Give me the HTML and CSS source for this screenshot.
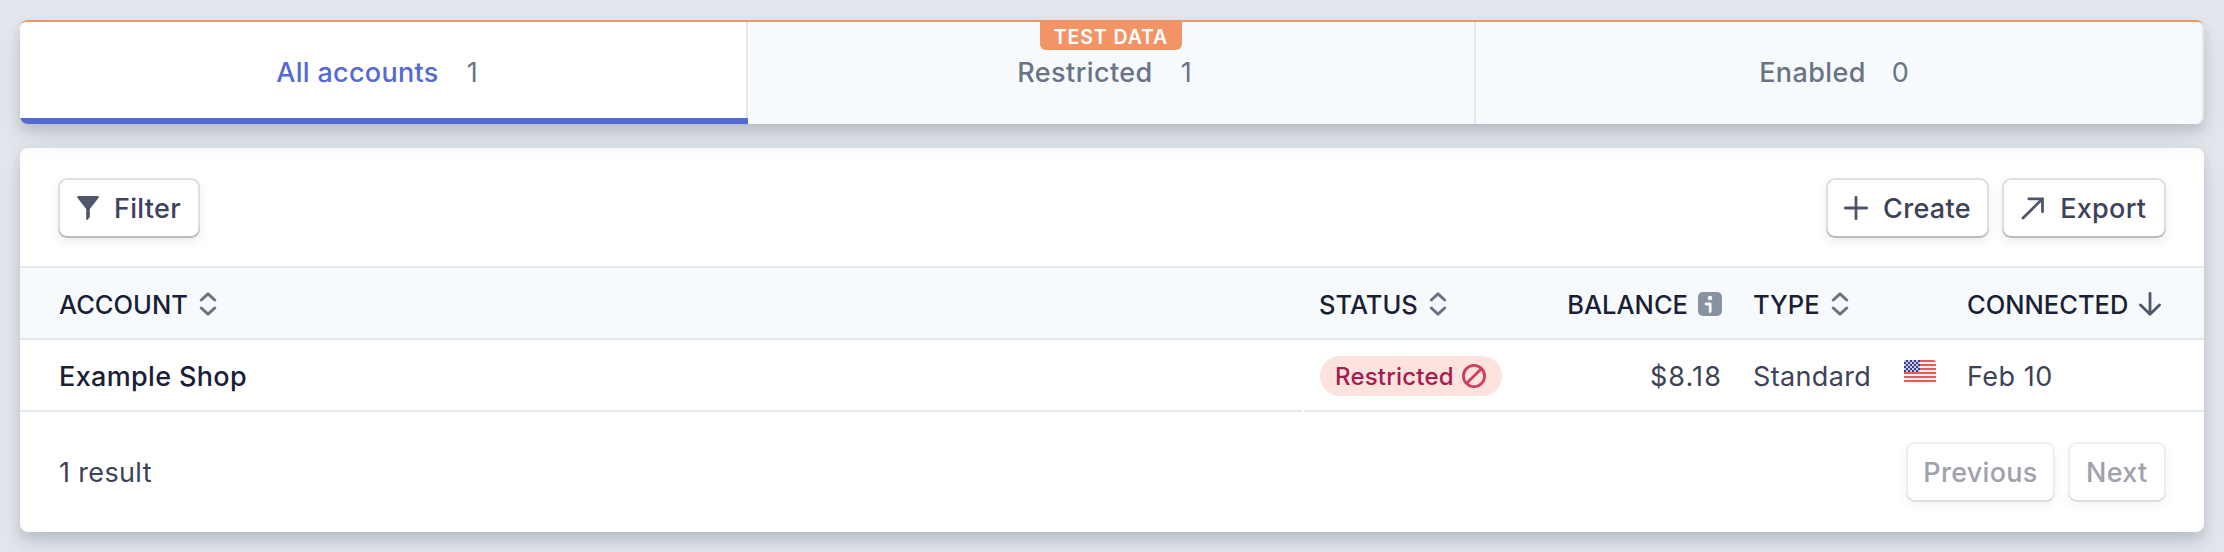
FILE: index.html
```html
<!DOCTYPE html>
<html lang="en">
<head>
<meta charset="utf-8">
<title>Connected accounts</title>
<link rel="stylesheet" href="styles.css">
</head>
<body>
<svg width="0" height="0" class="defs">
  <symbol id="sort" viewBox="0 0 18 24"><path d="M2.3 8 9 1.9 15.7 8M2.3 16 9 22.1 15.7 16" fill="none" stroke="currentColor" stroke-width="3" stroke-linecap="round" stroke-linejoin="round"/></symbol>
  <pattern id="stars" width="4" height="4" patternUnits="userSpaceOnUse"><path fill="#3c3f86" d="M0 0h4v4H0z"/><path fill="#c9cbe2" d="M0 0h2v2H0zM2 2h2v2H2z"/></pattern>
</svg>
<main class="page">
  <nav class="tabs">
    <a class="tab tab-active"><span class="tab-label">All accounts</span><span class="tab-count">1</span></a>
    <a class="tab tab-restricted"><span class="tab-label">Restricted</span><span class="tab-count">1</span></a>
    <a class="tab tab-enabled"><span class="tab-label">Enabled</span><span class="tab-count">0</span></a>
    <span class="badge">TEST DATA</span>
  </nav>
  <section class="card">
    <div class="toolbar">
      <button class="btn btn-filter"><svg width="22" height="24" viewBox="0 0 22 24"><path fill="currentColor" d="M1.2 0h19.6q1.6.3.8 1.8L12.8 13v7.5q0 .8-.7 1.5l-1.6 1.8q-1 .5-1.3-.6V13L.4 1.8Q-.4.4 1.2 0z"/></svg><span>Filter</span></button>
      <div class="actions">
        <button class="btn btn-create"><svg width="24" height="24" viewBox="0 0 24 24"><path d="M12 1.3v21.4M1.3 12h21.4" stroke="currentColor" stroke-width="2.8" stroke-linecap="round"/></svg><span>Create</span></button>
        <button class="btn btn-export"><svg width="24" height="24" viewBox="0 0 24 24"><path d="M2 22 21.5 2.8M7.8 2.8H21.5v13" fill="none" stroke="currentColor" stroke-width="2.8" stroke-linecap="round" stroke-linejoin="round"/></svg><span>Export</span></button>
      </div>
    </div>
    <div class="row head">
      <div class="cell account">ACCOUNT<svg class="sort" width="18" height="24"><use href="#sort"/></svg></div>
      <div class="cell status">STATUS<svg class="sort" width="18" height="24"><use href="#sort"/></svg></div>
      <div class="cell balance">BALANCE<svg class="info" width="24" height="24" viewBox="0 0 24 24"><rect width="24" height="24" rx="5" fill="#8792a2"/><circle cx="12" cy="6" r="2.3" fill="#f7fafc"/><path d="M8 12h4.2v7.6" fill="none" stroke="#f7fafc" stroke-width="2.8" stroke-linecap="round" stroke-linejoin="round"/></svg></div>
      <div class="cell type">TYPE<svg class="sort" width="18" height="24"><use href="#sort"/></svg></div>
      <div class="cell country"></div>
      <div class="cell connected">CONNECTED<svg class="down" width="22" height="24" viewBox="0 0 22 24"><path d="M11 1.3v20.6M1.5 13 11 22.2 20.5 13" fill="none" stroke="currentColor" stroke-width="2.8" stroke-linecap="round" stroke-linejoin="round"/></svg></div>
    </div>
    <div class="row body">
      <div class="cell account name">Example Shop</div>
      <div class="cell status"><span class="pill">Restricted<svg width="24" height="24" viewBox="0 0 24 24"><path d="M4.4 19.6 19.6 4.4" stroke="currentColor" stroke-width="2.8"/><circle cx="12" cy="12" r="10.6" fill="none" stroke="currentColor" stroke-width="2.8"/></svg></span></div>
      <div class="cell balance amount">$8.18</div>
      <div class="cell type">Standard</div>
      <div class="cell country"><svg class="flag" width="32" height="24" viewBox="0 0 32 24"><path fill="#fbf1f4" d="M0 0h32v24H0z"/><path fill="#e65c57" d="M0 0h32v2H0zM0 4h32v2H0zM0 8h32v2H0zM0 12h32v2H0zM0 16h32v2H0zM0 20h32v2H0z"/><path fill="url(#stars)" d="M0 0h16v12H0z"/></svg></div>
      <div class="cell connected">Feb 10</div>
    </div>
    <div class="footer">
      <span class="result">1 result</span>
      <div class="pager">
        <button class="btn btn-prev" disabled><span>Previous</span></button>
        <button class="btn btn-next" disabled><span>Next</span></button>
      </div>
    </div>
  </section>
</main>
</body>
</html>
```
FILE: styles.css
```css
* { box-sizing: border-box; }
body {
  margin: 0;
  height: 552px;
  overflow: hidden;
  background: #e3e8ee;
  color: #3c4257;
  font-family: Inter, "Liberation Sans", sans-serif;
  font-size: 27px;
}
svg { display: block; flex: none; }
.defs { position: absolute; }
.page { padding: 20px; display: flex; flex-direction: column; gap: 24px; }
.tabs, .card {
  border-radius: 8px;
  box-shadow: 0 14px 28px rgba(60, 66, 87, .12), 0 6px 12px rgba(0, 0, 0, .12);
}
.tabs {
  position: relative;
  display: grid;
  grid-template-columns: repeat(3, 728px);
  height: 104px;
  border-top: 2px solid #f29465;
}
.tab {
  display: flex;
  align-items: center;
  justify-content: center;
  gap: 28px;
  padding: 0 12px 2px 0;
  background: #f7fafc;
  border-right: 2px solid #e3e8ee;
  color: #697386;
}
.tab-restricted { padding-right: 13px; }
.tab-enabled { padding-right: 10px; border-radius: 0 6px 8px 0; }
.tab-label { font-weight: 500; letter-spacing: .3px; }
.tab-restricted .tab-label, .tab-enabled .tab-label { letter-spacing: .4px; }
.tab-enabled { gap: 26px; }
.tab-active {
  position: relative;
  border-radius: 6px 0 0 8px;
  background: linear-gradient(#fff 96px, #5469d4 96px);
  color: #5469d4;
}
.tab-active::after { content: ""; position: absolute; right: -2px; bottom: 0; width: 2px; height: 6px; background: #5469d4; }
.tab-count { color: #697386; }
.badge {
  position: absolute;
  top: 0;
  left: 1020px;
  width: 142px;
  height: 28px;
  border-radius: 0 0 6px 6px;
  background: #f29465;
  color: #fff;
  font-size: 19.5px;
  font-weight: 600;
  line-height: 30px;
  text-align: center;
  letter-spacing: .9px;
}
.card { height: 384px; background: #fff; }
.toolbar {
  height: 120px;
  padding: 30px 38.5px 0 38px;
  display: flex;
  justify-content: space-between;
  border-bottom: 2px solid #e3e8ee;
}
.actions, .pager { display: flex; gap: 13px; }
.btn {
  height: 60px;
  margin: 0;
  padding: 0;
  border: 0;
  border-radius: 9px;
  background: #fff;
  color: #3c4257;
  font: inherit;
  font-weight: 500;
  letter-spacing: .3px;
  display: flex;
  align-items: center;
  justify-content: center;
  gap: 15px;
  box-shadow: inset 0 0 0 2px rgba(60, 66, 87, .17), inset 0 -2px rgba(0, 0, 0, .16), 0 4px 10px rgba(60, 66, 87, .1);
}
.btn span { padding-top: 1px; }
.btn svg { color: #4f566b; }
.btn-filter { width: 142px; }
.btn-create { width: 163px; }
.btn-export { width: 163.5px; }
.btn-prev { width: 149px; }
.btn-next { width: 97.5px; }
.btn:disabled {
  color: #9fa1ac;
  box-shadow: inset 0 0 0 2px rgba(60, 66, 87, .09), inset 0 -2px rgba(0, 0, 0, .07), 0 4px 10px rgba(60, 66, 87, .06);
}
.row {
  display: grid;
  grid-template-columns: 1284px 236px 198px 150px 64px 1fr;
  height: 72px;
}
.cell { display: flex; align-items: center; padding-top: 2px; border-bottom: 2px solid #e3e8ee; }
.head { background: #f7fafc; color: #1a1f36; font-size: 25.5px; font-weight: 500; }
.account { padding-left: 39px; }
.status, .type, .connected { padding-left: 15px; }
.balance { justify-content: flex-end; padding-right: 16px; }
.country { padding-left: 16px; }
.body .status { padding-left: 16px; }
.body .account { margin-right: 2px; }
.amount { letter-spacing: 1.1px; }
.body .type, .result { letter-spacing: .35px; }
.body .connected { letter-spacing: .5px; }
.name { color: #1a1f36; font-weight: 500; letter-spacing: .35px; }
.sort { color: #697386; margin-left: 11px; }
.info { margin-left: 10px; }
.down { color: #4f566b; margin-left: 11px; }
.pill {
  width: 182px;
  height: 40px;
  border-radius: 20px;
  background: #fde2dd;
  color: #a41c4e;
  font-size: 24px;
  font-weight: 500;
  letter-spacing: .2px;
  display: flex;
  align-items: center;
  justify-content: space-between;
  padding: 0 16px 0 15px;
}
.pill svg { color: #cd3d64; }
.flag { border-radius: 3px; margin-top: -8px; }
.footer {
  height: 120px;
  padding: 30px 38.5px 0 39px;
  display: flex;
  justify-content: space-between;
}
.result { line-height: 61px; }
```
